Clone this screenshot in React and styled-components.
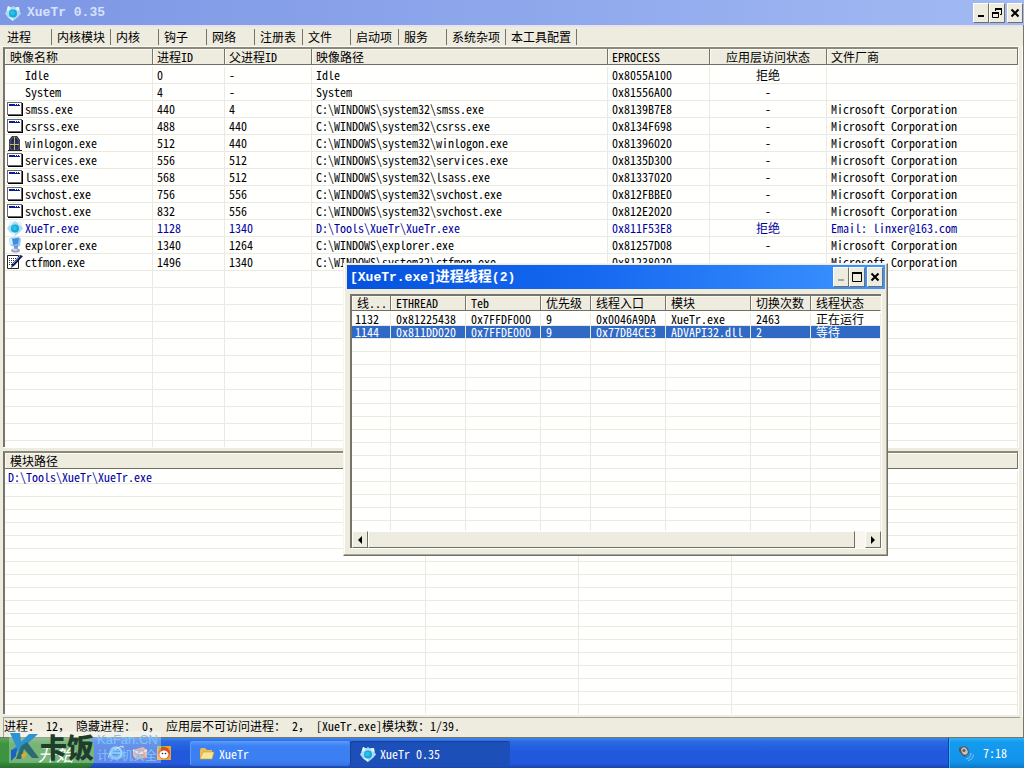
import React from "react";
import styled, { createGlobalStyle, css } from "styled-components";

const Global = createGlobalStyle`
  *, *::before, *::after { box-sizing: border-box; }
  body {
    margin: 0;
    overflow: hidden;
    background: #ece9d8;
    color: #000;
    font: 12px/16px "Noto Sans Mono CJK SC", "Liberation Mono", "Noto Sans CJK SC", monospace;
  }
  button { font: inherit; color: inherit; padding: 0; border: 0; background: none; }
`;

const Desktop = styled.div`
  height: 100vh;
  display: flex;
  flex-direction: column;
  position: relative;
`;

const MainWindow = styled.div`
  flex: 1;
  min-height: 0;
  display: flex;
  flex-direction: column;
  background: #eeebdf;
  border-right: 1px solid #77756b;
  border-bottom: 1px solid #77756b;
`;

const TitleBar = styled.header`
  display: flex;
  align-items: center;
  flex: none;
  height: ${(p) => (p.$active ? 24 : 25)}px;
  padding: 0 ${(p) => (p.$active ? 2 : 1)}px 0 ${(p) => (p.$active ? 3 : 5)}px;
  color: ${(p) => (p.$active ? "#fff" : "#d6e2fb")};
  background: ${(p) =>
    p.$active
      ? "linear-gradient(90deg, #0553dd, #1668f0 45%, #3d95ff)"
      : "linear-gradient(90deg, #7d97e5, #8ca5eb 45%, #a2baf3)"};
  margin-right: ${(p) => (p.$active ? 0 : -1)}px;
`;

const Title = styled.h1`
  flex: 1;
  margin: 0 0 0 ${(p) => (p.$icon ? 6 : 0)}px;
  font: 700 13px/20px "Liberation Mono", "Noto Sans Mono CJK SC", monospace;
  white-space: pre;
`;

const TitleHan = styled.span`
  font-size: 14px;
`;

const CaptionButtons = styled.div`
  display: flex;
`;

const CaptionButton = styled.button`
  width: 16px;
  height: 20px;
  display: grid;
  place-items: center;
  background: #eeebdf;
  border: 1px solid;
  border-color: #fff #716f64 #716f64 #fff;
  color: ${(p) => (p.$dim ? "#aca899" : "#000")};
  &:last-child { margin-left: 2px; }
`;

const TabBar = styled.nav`
  display: flex;
  flex: none;
  height: 22px;
  padding: 2px 0 2px 2px;
  border-top: 2px solid #e4e4ea;
  border-bottom: 1px solid #faf9f3;
`;

const Tab = styled.button`
  min-width: 48px;
  height: 16px;
  line-height: 14px;
  padding: 0 5px;
  text-align: left;
  white-space: nowrap;
  border-right: 1px solid #77756b;
  &:first-child { min-width: 50px; line-height: 12px; }
`;

const Panels = styled.main`
  flex: 1;
  min-height: 0;
  display: flex;
  flex-direction: column;
  gap: 4px;
  padding: 0 4px 3px 3px;
  border-right: 1px solid #fff;
`;

const Panel = styled.section`
  flex: ${(p) => p.$grow} 1 0;
  min-height: 0;
  overflow: hidden;
  background: #fffffd;
  border: solid #77756b;
  border-width: 2px 0 0 2px;
  border-top-color: #8a887d;
  box-shadow: 1px 1px 0 #fff;
`;

const Grid = styled.table`
  width: 100%;
  table-layout: fixed;
  border-collapse: separate;
  border-spacing: 0;
`;

const HeadCell = styled.th`
  height: ${(p) => p.$height || 16}px;
  padding: 0 0 0 ${(p) => (p.$align ? 0 : p.$pad || 4)}px;
  line-height: 14px;
  font-weight: 400;
  text-align: ${(p) => p.$align || "left"};
  white-space: nowrap;
  background: #eeebdf;
  border-bottom: 1px solid #716f64;
  border-right: 1px solid ${(p) => (p.$plain ? "#eeebdf" : "#77756b")};
  box-shadow: inset 1px 1px 0 #faf9f3;
`;

const Row = styled.tr`
  color: ${(p) => (p.$selected ? "#fff" : p.$blue ? "#0000a0" : "#000")};
  background: ${(p) => (p.$selected ? "#316ac5" : "transparent")};
`;

const Cell = styled.td`
  height: ${(p) => p.$height}px;
  padding: 0 0 0 ${(p) => (p.$align ? 0 : p.$pad === undefined ? 4 : p.$pad)}px;
  line-height: ${(p) => p.$height - 1}px;
  text-align: ${(p) => p.$align || "left"};
  white-space: pre;
  border-right: 1px solid #ebe9e0;
  border-bottom: 1px solid #ebe9e0;
`;

const Spacer = styled.td`
  height: 2px;
  padding: 0;
`;

const NameCell = styled.div`
  display: flex;
  align-items: center;
  gap: 2px;
  height: 16px;
  padding-left: 2px;
`;

const IconSlot = styled.span`
  width: 16px;
  height: 16px;
  flex: none;
  display: block;
  svg { display: block; }
`;

const StatusBar = styled.footer`
  flex: none;
  height: 20px;
  margin: 0 3px;
  line-height: 15px;
  white-space: pre;
  border-top: 1px solid #a5a396;
  border-left: 1px solid #a5a396;
`;

const Dialog = styled.div`
  position: absolute;
  left: 343px;
  top: 263px;
  width: 545px;
  height: 293px;
  display: flex;
  flex-direction: column;
  padding: 1px 2px 7px 3px;
  background: #eeebdf;
  border: 1px solid;
  border-color: #f6f4ec #716f64 #716f64 #f6f4ec;
  box-shadow: inset -1px -1px 0 #aca899, inset 1px 0 0 #fff;
`;

const DialogBody = styled.div`
  flex: 1;
  min-height: 0;
  display: flex;
  flex-direction: column;
  margin: 5px 4px 0 3px;
  background: #fffffd;
  border: solid #77756b;
  border-width: 2px 0 0 2px;
  box-shadow: 1px 1px 0 #fff;
`;

const DialogScroll = styled.div`
  flex: 1;
  min-height: 0;
  overflow: hidden;
`;

const HScroll = styled.div`
  flex: none;
  display: flex;
  height: 17px;
  background: #f8f6ee;
`;

const raised = css`
  background: #eeebdf;
  border: 1px solid;
  border-color: #fff #716f64 #716f64 #fff;
`;

const ScrollButton = styled.button`
  ${raised}
  width: 16px;
  display: grid;
  place-items: center;
`;

const ScrollThumb = styled.div`
  ${raised}
  flex: 1;
  margin-right: 10px;
`;

const Taskbar = styled.div`
  flex: none;
  height: 30px;
  display: flex;
  position: relative;
  color: #fff;
  background: linear-gradient(#3f86ec, #2a6ae4 12%, #2159dc 45%, #2258dc 85%, #1a45ae);
`;

const StartButton = styled.button`
  width: 94px;
  color: #fff;
  font-size: 18px;
  font-style: italic;
  line-height: 28px;
  padding-left: 18px;
  border-radius: 0 8px 8px 0;
  background: linear-gradient(#5aa85a, #3d9440 20%, #3b9440 75%, #28702c);
`;

const QuickLaunch = styled.div`
  display: flex;
  align-items: center;
  gap: 8px;
  width: 96px;
  padding-left: 14px;
`;

const Task = styled.button`
  width: 160px;
  height: 25px;
  margin: 3px 0 0 0;
  padding-left: ${(p) => (p.$active ? 10 : 9)}px;
  display: flex;
  align-items: center;
  gap: 4px;
  white-space: pre;
  color: #fff;
  border-radius: 3px;
  background: ${(p) => (p.$active ? "#1c50b8" : "linear-gradient(#5a9bfb, #3c81f3 20%, #3b7ff2 80%, #336fdc)")};
  box-shadow: inset 1px 1px 0 ${(p) => (p.$active ? "#163f96" : "#5c9cfa")};
`;

const Tray = styled.div`
  width: 76px;
  margin-left: auto;
  display: flex;
  align-items: center;
  gap: 9px;
  padding-left: 9px;
  border-left: 1px solid #0c3f9c;
  background: linear-gradient(#2fb0f6, #149bee 15%, #1193ea 80%, #0d78c8);
  box-shadow: inset 1px 0 0 #30b9fa;
`;

const Watermark = styled.div`
  position: absolute;
  z-index: 1;
  left: 9px;
  bottom: 5px;
  width: 152px;
  height: 32px;
  display: flex;
  align-items: center;
  background: rgba(255, 255, 255, 0.3);
`;

const MarkName = styled.strong`
  flex: none;
  width: 57px;
  font: 900 27px/28px "Noto Sans CJK SC", sans-serif;
  color: #203d2c;
`;

const MarkSub = styled.span`
  flex: none;
  display: flex;
  flex-direction: column;
  color: #7cc6ff;
  white-space: nowrap;
`;

const MarkSite = styled.span`
  font: 13px/15px "Liberation Sans", sans-serif;
`;

const MarkTopic = styled.span`
  font: 12px/15px "Noto Sans CJK SC", sans-serif;
`;

const GemIcon = () => (
  <svg width="16" height="16" viewBox="0 0 16 16" aria-hidden="true">
    <path d="M3 1l3 1.500L8 1l2 1.500L14 2l.5 4L16 8.500 13 12l-5 4-5-3.500L0 8.500 1.500 6z" fill="#a9dcf5" />
    <path d="M3 1l3 1.500L4 5 1.500 6zM10 2.500L14 2l.5 4-2.500-1zM3 12l5 4v-3z" fill="#e3f7ff" />
    <circle cx="8" cy="8.500" r="4" fill="#1ba5dc" />
    <circle cx="7.500" cy="8" r="2.300" fill="#22c6e6" />
  </svg>
);

const WindowIcon = () => (
  <svg width="16" height="16" viewBox="0 0 16 16" aria-hidden="true">
    <path d="M1 2h15v13H1z" fill="#000" />
    <path d="M0 1h15v13H0z" fill="#68686c" />
    <path d="M1 2h13v11H1z" fill="#fff" />
    <path d="M2 3h11v2H2z" fill="#0a1a98" />
    <path d="M8 3h1v1H8zM10 3h1v1h-1zM12 3h1v1h-1z" fill="#fff" />
  </svg>
);

const GateIcon = () => (
  <svg width="16" height="16" viewBox="0 0 16 16" aria-hidden="true">
    <path d="M2 15V5l3-4h5l3 4v10z" fill="#23264e" />
    <path d="M3 14V6l3-4h3l3 4v8z" fill="none" stroke="#6d6d55" />
    <path d="M7.500 2v13M3 9.500h9" stroke="#c0c058" />
    <path d="M4 6h3v3H4zM8 6h3v3H8zM4 11h3v3H4zM8 11h3v3H8z" fill="#2a2d72" />
    <path d="M1 15.500h14" stroke="#222" />
  </svg>
);

const MonitorIcon = () => (
  <svg width="16" height="16" viewBox="0 0 16 16" aria-hidden="true">
    <path d="M2 1l10-1 2 2-1 7-6 1-4-2z" fill="#8fc4ee" />
    <path d="M5 2l7-1-1 6-5 1z" fill="#3c8fe0" />
    <path d="M2 1l3 1 1 6-3-1z" fill="#d6effc" />
    <path d="M7 9l4-1v4H7z" fill="#7799cc" />
    <ellipse cx="8.500" cy="13.500" rx="4.500" ry="2" fill="#9c9fcf" />
    <ellipse cx="8" cy="12.800" rx="2.500" ry="1" fill="#d7d6ef" />
  </svg>
);

const PenIcon = () => (
  <svg width="16" height="16" viewBox="0 0 16 16" aria-hidden="true">
    <path d="M.5 1.500h11v13H.5z" fill="#fff" stroke="#222" />
    <path d="M2 4.500h8M2 6.500h7M2 8.500h5M2 10.500h3" stroke="#333" strokeDasharray="1 1" />
    <path d="M4 14l1-4L13 1l3 1-8 9z" fill="#101a58" />
    <path d="M6 10l7-8" stroke="#6f9fe0" />
  </svg>
);

const FolderIcon = () => (
  <svg width="16" height="16" viewBox="0 0 16 16" aria-hidden="true">
    <path d="M1 4l1-2h4l2 2h5v9H1z" fill="#e9bd4f" />
    <path d="M1 13L4 6h11l-2 7z" fill="#fde58f" stroke="#c99a35" strokeWidth=".6" />
  </svg>
);

const SpeakerIcon = () => (
  <svg width="16" height="16" viewBox="0 0 16 16" aria-hidden="true">
    <path d="M1 3l5-2 4 2 1 5-4 4-3-2-3-4z" fill="#54565e" />
    <ellipse cx="6.500" cy="6" rx="3" ry="3.800" transform="rotate(-25 6.500 6)" fill="#c4c2bc" />
    <circle cx="6" cy="5.500" r="1.500" fill="#5b5b62" />
    <path d="M8 14q5-1 5-6M10 15.500q5-1 5.500-6" fill="none" stroke="#94bdf8" />
  </svg>
);

const BrowserIcon = () => (
  <svg width="16" height="16" viewBox="0 0 16 16" aria-hidden="true">
    <circle cx="8" cy="8" r="5.500" fill="none" stroke="#6cc3f7" strokeWidth="2.500" />
    <path d="M3 8h10" stroke="#6cc3f7" strokeWidth="2" />
    <path d="M1 13Q-1 9 8 4t7-1" fill="none" stroke="#bfe6ff" />
  </svg>
);

const MailIcon = () => (
  <svg width="16" height="16" viewBox="0 0 16 16" aria-hidden="true">
    <path d="M1 5l10-3 4 3v8l-11 1-3-3z" fill="#e6987a" />
    <path d="M1 5l7 4 7-4" fill="none" stroke="#fbe3d6" strokeWidth="1.500" />
    <path d="M4 14l5-5 5 4" fill="none" stroke="#c9654c" />
  </svg>
);

const PlayerIcon = () => (
  <svg width="16" height="16" viewBox="0 0 16 16" aria-hidden="true">
    <path d="M1 1h14v14H1z" fill="#e9a233" />
    <path d="M1 1h7v3H1z" fill="#6dbb3e" />
    <circle cx="8" cy="8" r="6" fill="#e04a22" />
    <ellipse cx="8" cy="9.500" rx="4.500" ry="4" fill="#fff" />
    <circle cx="6.500" cy="8.500" r=".8" fill="#222" />
    <circle cx="9.500" cy="8.500" r=".8" fill="#222" />
  </svg>
);

const MarkLogo = () => (
  <svg width="31" height="32" viewBox="0 0 31 32" aria-hidden="true">
    <path d="M1 2h10l1 9 8-8h9L15 16l-7 5-4-3 3-3z" fill="#2c92d2" />
    <path d="M12 15l6-4 12 16h-7l-8-9-3 10H7z" fill="#2c6a70" />
    <path d="M2 19l6-2-1 8-5 5z" fill="#1c62c4" />
    <path d="M12 24l4-3 2 3-4 4z" fill="#d9ac32" />
  </svg>
);

const CaptionGlyph = ({ kind }) => (
  <svg width="12" height="12" viewBox="0 0 12 12" aria-hidden="true" fill="none" stroke="currentColor">
    {kind === "min" && <path d="M3 9h6" strokeWidth="2" />}
    {kind === "max" && (
      <>
        <path d="M1.500 2.500h9v8h-9z" />
        <path d="M1 2h10" strokeWidth="2" />
      </>
    )}
    {kind === "restore" && (
      <>
        <path d="M4.500 4V2.500h6v5H9" />
        <path d="M4 2h7" strokeWidth="2" />
        <path d="M1.500 5.500h6v5h-6z" />
        <path d="M1 6h7" strokeWidth="2" />
      </>
    )}
    {kind === "close" && <path d="M2.500 2.500l7 7M9.500 2.500l-7 7" strokeWidth="2" />}
  </svg>
);

const tabs = ["进程", "内核模块", "内核", "钩子", "网络", "注册表", "文件", "启动项", "服务", "系统杂项", "本工具配置"];

const sys = "C:\\WINDOWS\\system32\\";
const ms = "Microsoft Corporation";
const processes = [
  [null, "Idle", "0", "-", "Idle", "0x8055A100", "拒绝", ""],
  [null, "System", "4", "-", "System", "0x81556A00", "-", ""],
  [WindowIcon, "smss.exe", "440", "4", sys + "smss.exe", "0x8139B7E8", "-", ms],
  [WindowIcon, "csrss.exe", "488", "440", sys + "csrss.exe", "0x8134F698", "-", ms],
  [GateIcon, "winlogon.exe", "512", "440", sys + "winlogon.exe", "0x81396020", "-", ms],
  [WindowIcon, "services.exe", "556", "512", sys + "services.exe", "0x8135D300", "-", ms],
  [WindowIcon, "lsass.exe", "568", "512", sys + "lsass.exe", "0x81337020", "-", ms],
  [WindowIcon, "svchost.exe", "756", "556", sys + "svchost.exe", "0x812FBBE0", "-", ms],
  [WindowIcon, "svchost.exe", "832", "556", sys + "svchost.exe", "0x812E2020", "-", ms],
  [GemIcon, "XueTr.exe", "1128", "1340", "D:\\Tools\\XueTr\\XueTr.exe", "0x811F53E8", "拒绝", "Email: linxer@163.com"],
  [MonitorIcon, "explorer.exe", "1340", "1264", "C:\\WINDOWS\\explorer.exe", "0x81257D08", "-", ms],
  [PenIcon, "ctfmon.exe", "1496", "1340", sys + "ctfmon.exe", "0x81238020", "-", ms],
];
const processHeads = ["映像名称", "进程ID", "父进程ID", "映像路径", "EPROCESS", "应用层访问状态", "文件厂商"];

const threadHeads = ["线...", "ETHREAD", "Teb", "优先级", "线程入口", "模块", "切换次数", "线程状态"];
const threads = [
  ["1132", "0x81225438", "0x7FFDF000", "9", "0x0046A9DA", "XueTr.exe", "2463", "正在运行"],
  ["1144", "0x811DD020", "0x7FFDE000", "9", "0x77DB4CE3", "ADVAPI32.dll", "2", "等待"],
];

const Columns = ({ widths }) => (
  <colgroup>
    {widths.map((w, i) => (
      <col key={i} width={w} />
    ))}
    <col />
  </colgroup>
);

const EmptyRows = ({ count, columns, height }) =>
  Array.from({ length: count }, (_, r) => (
    <Row key={"empty" + r}>
      {Array.from({ length: columns }, (_, c) => (
        <Cell key={c} $height={height} />
      ))}
    </Row>
  ));

const ProcessTable = () => (
  <Grid>
    <Columns widths={[148, 72, 87, 296, 102, 117]} />
    <thead>
      <tr>
        {processHeads.map((h, i) => (
          <HeadCell key={h} $pad={i ? 4 : 5} $align={i === 5 ? "center" : undefined}>
            {h}
          </HeadCell>
        ))}
      </tr>
    </thead>
    <tbody>
      <tr>
        <Spacer colSpan={7} />
      </tr>
      {processes.map(([Icon, name, ...rest]) => (
        <Row key={rest[3]} $blue={name === "XueTr.exe"}>
          <Cell $height={17} $pad={0}>
            <NameCell>
              <IconSlot>{Icon && <Icon />}</IconSlot>
              {name}
            </NameCell>
          </Cell>
          {rest.map((v, i) => (
            <Cell key={i} $height={17} $align={i === 4 ? "center" : undefined}>
              {v}
            </Cell>
          ))}
        </Row>
      ))}
      <EmptyRows count={30} columns={7} height={17} />
    </tbody>
  </Grid>
);

const ModuleTable = () => (
  <Grid>
    <Columns widths={[421, 153, 153]} />
    <thead>
      <tr>
        <HeadCell $pad={5} colSpan={4}>
          模块路径
        </HeadCell>
      </tr>
    </thead>
    <tbody>
      <tr>
        <Spacer colSpan={4} />
      </tr>
      <Row $blue>
        <Cell $height={13} $pad={3}>
          D:\Tools\XueTr\XueTr.exe
        </Cell>
        <Cell $height={13} />
        <Cell $height={13} />
        <Cell $height={13} />
      </Row>
      <EmptyRows count={40} columns={4} height={13} />
    </tbody>
  </Grid>
);

const ThreadTable = () => (
  <Grid>
    <Columns widths={[39, 75, 75, 50, 75, 85, 60]} />
    <thead>
      <tr>
        {threadHeads.map((h, i) => (
          <HeadCell key={h} $pad={5} $height={15} $plain={i === 7}>
            {h}
          </HeadCell>
        ))}
      </tr>
    </thead>
    <tbody>
      <tr>
        <Spacer colSpan={8} />
      </tr>
      {threads.map((t, r) => (
        <Row key={t[0]} $selected={r === 1}>
          {t.map((v, i) => (
            <Cell key={i} $height={13} $pad={i ? 5 : 3}>
              {v}
            </Cell>
          ))}
        </Row>
      ))}
      <EmptyRows count={20} columns={8} height={13} />
    </tbody>
  </Grid>
);

const Captions = ({ middle, dim }) => (
  <CaptionButtons>
    <CaptionButton $dim={dim} aria-label="最小化">
      <CaptionGlyph kind="min" />
    </CaptionButton>
    <CaptionButton aria-label="最大化">
      <CaptionGlyph kind={middle} />
    </CaptionButton>
    <CaptionButton aria-label="关闭">
      <CaptionGlyph kind="close" />
    </CaptionButton>
  </CaptionButtons>
);

export default function App() {
  return (
    <>
      <Global />
      <Desktop>
        <MainWindow>
          <TitleBar>
            <GemIcon />
            <Title $icon>XueTr 0.35</Title>
            <Captions middle="restore" />
          </TitleBar>
          <TabBar>
            {tabs.map((t) => (
              <Tab key={t}>{t}</Tab>
            ))}
          </TabBar>
          <Panels>
            <Panel $grow={604}>
              <ProcessTable />
            </Panel>
            <Panel $grow={396}>
              <ModuleTable />
            </Panel>
          </Panels>
          <StatusBar>进程： 12， 隐藏进程： 0， 应用层不可访问进程： 2， [XueTr.exe]模块数：1/39.</StatusBar>
        </MainWindow>

        <Taskbar>
          <StartButton>开始</StartButton>
          <QuickLaunch>
            <BrowserIcon />
            <MailIcon />
            <PlayerIcon />
          </QuickLaunch>
          <Task>
            <FolderIcon />
            XueTr
          </Task>
          <Task $active>
            <GemIcon />
            XueTr 0.35
          </Task>
          <Tray>
            <SpeakerIcon />
            <time>7:18</time>
          </Tray>
          <Watermark>
            <MarkLogo />
            <MarkName>卡饭</MarkName>
            <MarkSub>
              <MarkSite>KaFan.CN</MarkSite>
              <MarkTopic>计算机安全</MarkTopic>
            </MarkSub>
          </Watermark>
        </Taskbar>

        <Dialog role="dialog" aria-label="进程线程">
          <TitleBar $active>
            <Title>
              [XueTr.exe]<TitleHan>进程线程</TitleHan>(2)
            </Title>
            <Captions middle="max" dim />
          </TitleBar>
          <DialogBody>
            <DialogScroll>
              <ThreadTable />
            </DialogScroll>
            <HScroll>
              <ScrollButton aria-label="向左">
                <svg width="4" height="8" viewBox="0 0 4 8">
                  <path d="M4 0v8L0 4z" />
                </svg>
              </ScrollButton>
              <ScrollThumb />
              <ScrollButton aria-label="向右">
                <svg width="4" height="8" viewBox="0 0 4 8">
                  <path d="M0 0v8l4-4z" />
                </svg>
              </ScrollButton>
            </HScroll>
          </DialogBody>
        </Dialog>
      </Desktop>
    </>
  );
}
